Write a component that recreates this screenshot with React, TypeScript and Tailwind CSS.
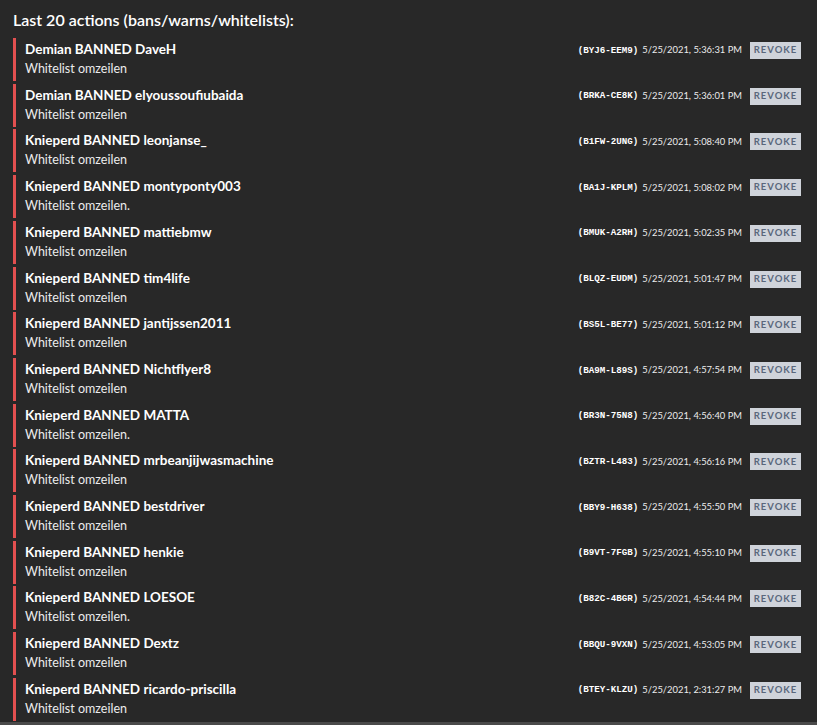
import React from "react";

const rows: [string, string, string, string, string][] = [
  ["Demian", "DaveH", "Whitelist omzeilen", "BYJ6-EEM9", "5/25/2021, 5:36:31 PM"],
  ["Demian", "elyoussoufiubaida", "Whitelist omzeilen", "BRKA-CE8K", "5/25/2021, 5:36:01 PM"],
  ["Knieperd", "leonjanse_", "Whitelist omzeilen", "B1FW-2UNG", "5/25/2021, 5:08:40 PM"],
  ["Knieperd", "montyponty003", "Whitelist omzeilen.", "BA1J-KPLM", "5/25/2021, 5:08:02 PM"],
  ["Knieperd", "mattiebmw", "Whitelist omzeilen", "BMUK-A2RH", "5/25/2021, 5:02:35 PM"],
  ["Knieperd", "tim4life", "Whitelist omzeilen", "BLQZ-EUDM", "5/25/2021, 5:01:47 PM"],
  ["Knieperd", "jantijssen2011", "Whitelist omzeilen", "BS5L-BE77", "5/25/2021, 5:01:12 PM"],
  ["Knieperd", "Nichtflyer8", "Whitelist omzeilen", "BA9M-L89S", "5/25/2021, 4:57:54 PM"],
  ["Knieperd", "MATTA", "Whitelist omzeilen.", "BR3N-75N8", "5/25/2021, 4:56:40 PM"],
  ["Knieperd", "mrbeanjijwasmachine", "Whitelist omzeilen", "BZTR-L483", "5/25/2021, 4:56:16 PM"],
  ["Knieperd", "bestdriver", "Whitelist omzeilen", "BBY9-H638", "5/25/2021, 4:55:50 PM"],
  ["Knieperd", "henkie", "Whitelist omzeilen", "B9VT-7FGB", "5/25/2021, 4:55:10 PM"],
  ["Knieperd", "LOESOE", "Whitelist omzeilen.", "B82C-4BGR", "5/25/2021, 4:54:44 PM"],
  ["Knieperd", "Dextz", "Whitelist omzeilen", "BBQU-9VXN", "5/25/2021, 4:53:05 PM"],
  ["Knieperd", "ricardo-priscilla", "Whitelist omzeilen", "BTEY-KLZU", "5/25/2021, 2:31:27 PM"],
];

export default function App() {
  return (
    <div
      className="w-[817px] h-[725px] overflow-hidden bg-[#282828] text-white"
      style={{ fontFamily: 'Lato, "Noto Sans", sans-serif' }}
    >
      <div className="h-[722px] overflow-hidden pl-[13px] pr-[16px]">
        <div className="pt-[9px] h-[38px] text-[16px] leading-[22px] font-semibold text-white">
          Last 20 actions (bans/warns/whitelists):
        </div>
        <div className="flex flex-col">
          {rows.map((r, i) => (
            <div
              key={i}
              className="flex h-[43px] shrink-0 mb-[2.71px] border-l-[3px] border-[#e25050] pl-[9px]"
            >
              <div className="flex-1 min-w-0 pt-[1px]">
                <div className="text-[13.5px] leading-[20px] font-bold text-white">
                  {r[0]} BANNED {r[1]}
                </div>
                <div className="text-[12.5px] leading-[20px] text-[#ececec]">{r[2]}</div>
              </div>
              <div className="flex items-start pt-[4px]">
                <div className="flex items-center h-[17px] gap-[4px]">
                  <span
                    className="text-[9.2px] font-bold text-white"
                    style={{ fontFamily: '"Liberation Mono", monospace' }}
                  >
                    ({r[3]})
                  </span>
                  <span className="text-[9.4px] text-[#ececec]">{r[4]}</span>
                </div>
                <div className="ml-[8px] w-[51px] h-[17px] bg-[#cfd3da] text-[#5a677c] text-[9.5px] font-bold tracking-[1px] flex items-center justify-center">
                  REVOKE
                </div>
              </div>
            </div>
          ))}
          <div className="h-[20px] shrink-0 border-l-[3px] border-[#e25050]" />
        </div>
      </div>
      <div className="h-[3px] bg-[#4a4a4a]" />
    </div>
  );
}
